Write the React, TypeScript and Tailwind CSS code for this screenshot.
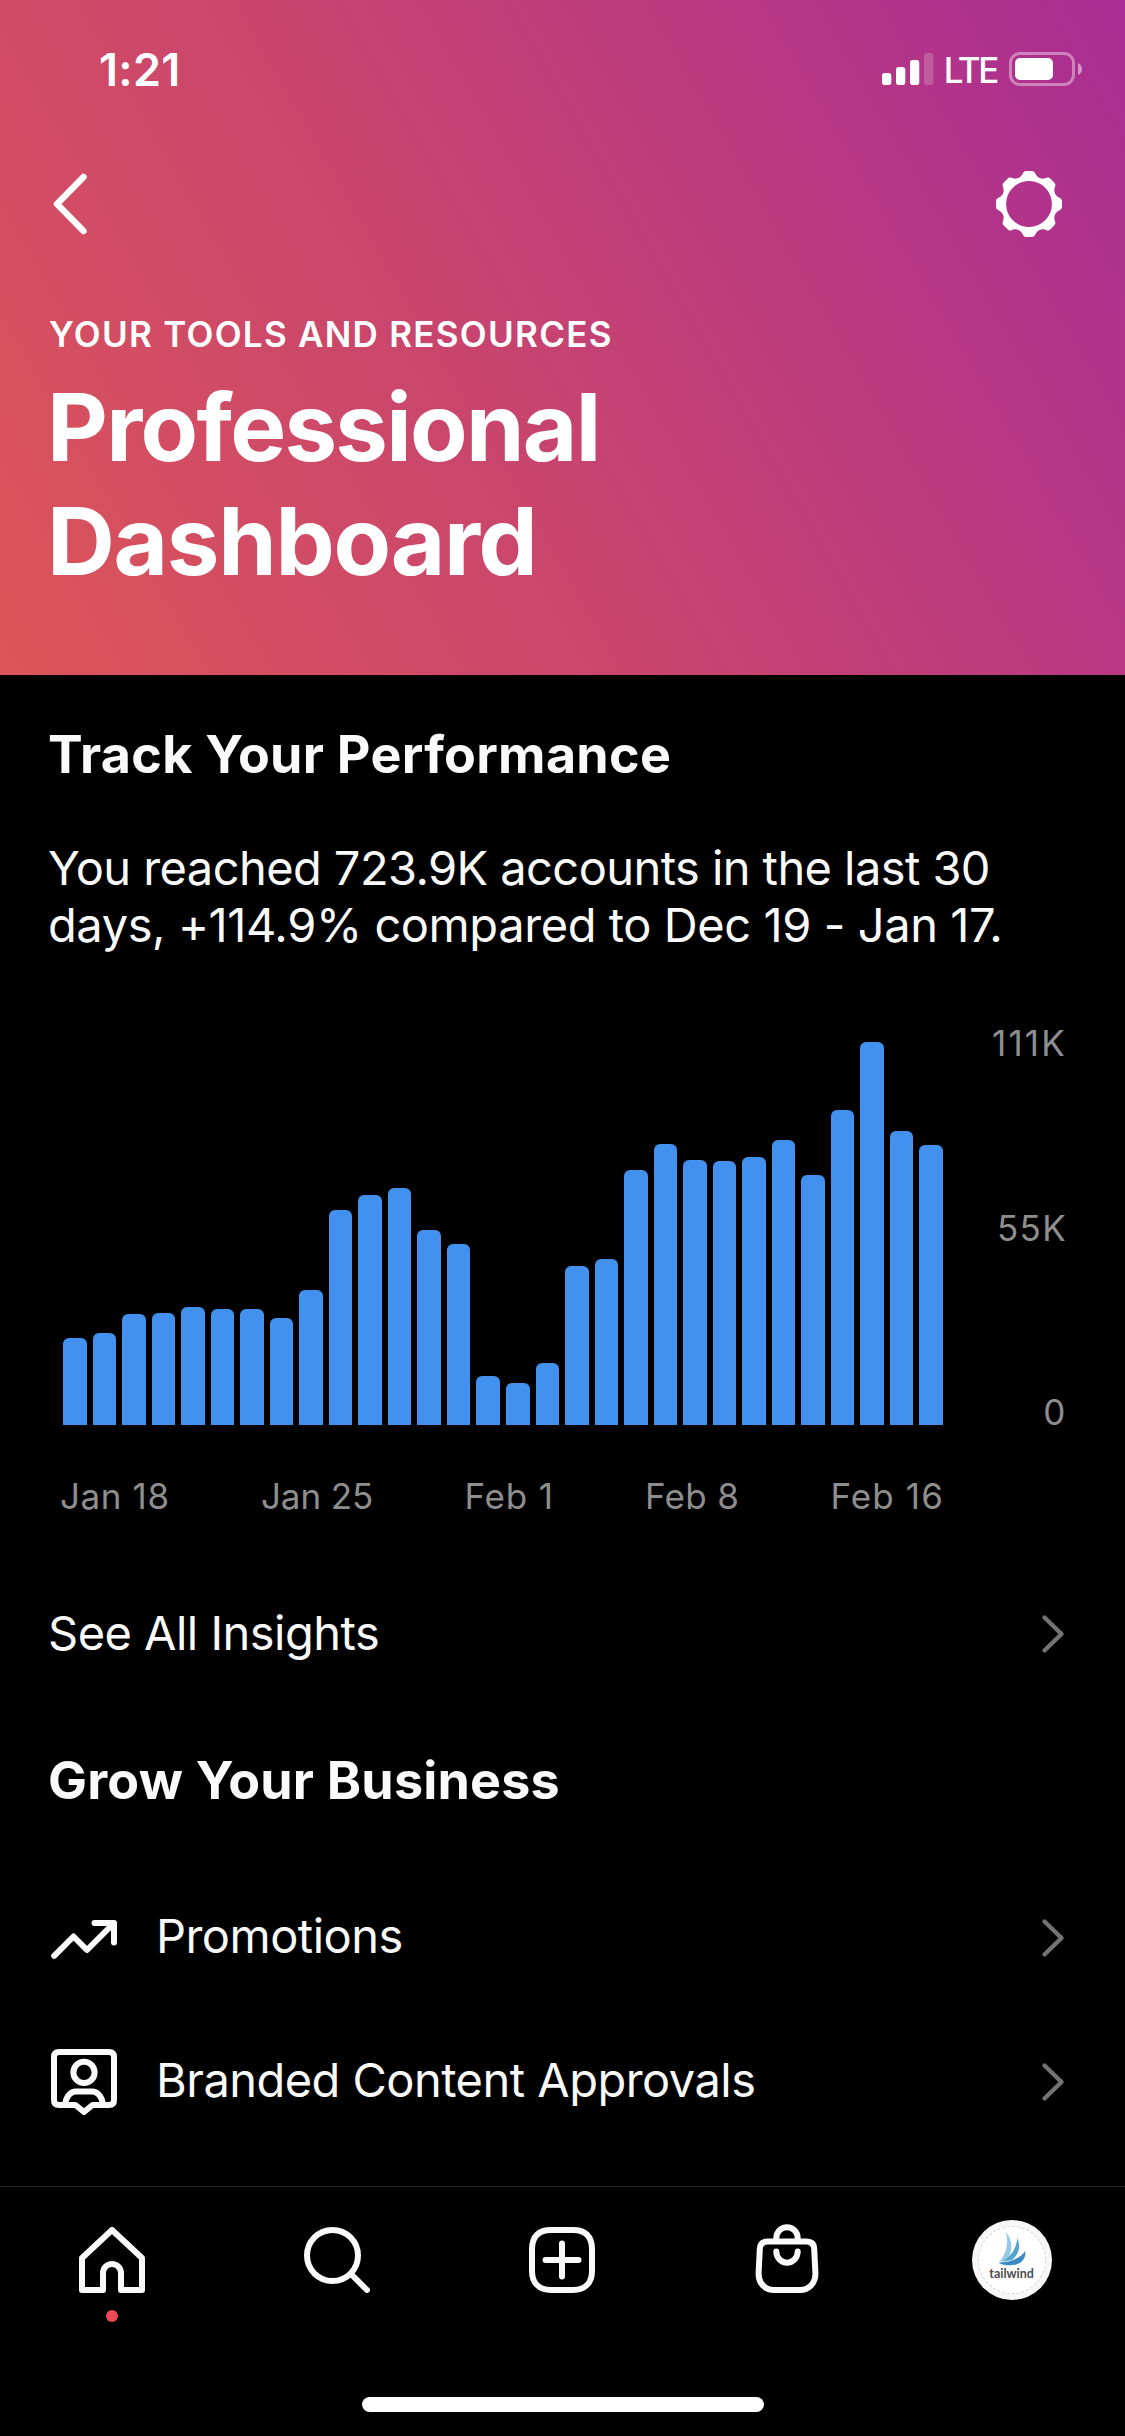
import React, { FC, ReactNode } from "react";

const reachData = [
  87, 92, 111, 112, 118, 116, 116, 107, 135, 215, 230, 237, 195, 181, 49, 42, 62, 159, 166, 255,
  281, 265, 264, 268, 285, 250, 315, 383, 294, 280,
];
const dateLabels = [
  { label: "Jan 18", className: "tracking-[0.6px]" },
  { label: "Jan 25", className: "tracking-[-0.1px]" },
  { label: "Feb 1", className: "tracking-[0.8px]" },
  { label: "Feb 8", className: "tracking-[0.3px]" },
  { label: "Feb 16", className: "tracking-[1.1px]" },
];
const valueLabels = [
  { label: "111K", className: "tracking-[2.2px]" },
  { label: "55K", className: "tracking-[1.3px]" },
  { label: "0", className: "tracking-[1.6px]" },
];

const IconChevronRight: FC = () => (
  <svg width="24" height="40" viewBox="0 0 24 40" fill="none" className="shrink-0">
    <path
      d="M3.5 3.5L20.5 20L3.5 36.5"
      stroke="#737373"
      strokeWidth="4.4"
      strokeLinecap="round"
      strokeLinejoin="round"
    />
  </svg>
);

const IconBack: FC = () => (
  <svg width="40" height="66" viewBox="0 0 40 66" fill="none">
    <path
      d="M33.5 6L7 33L33.5 60"
      stroke="#fff"
      strokeWidth="6.4"
      strokeLinecap="round"
      strokeLinejoin="round"
    />
  </svg>
);

const IconGear: FC = () => (
  <svg width="66" height="66" viewBox="-33 -33 66 66" fill="#fff">
    <circle r="25.3" fill="none" stroke="#fff" strokeWidth="4.8" />
    {[0, 45, 90, 135, 180, 225, 270, 315].map((deg) => (
      <path
        key={deg}
        transform={`rotate(${deg})`}
        d="M-12 -25C-8 -27 -7 -29 -6 -31Q-5 -33 -3 -33H3Q5 -33 6 -31C7 -29 8 -27 12 -25Z"
      />
    ))}
  </svg>
);

const IconTrend: FC = () => (
  <svg width="66" height="66" viewBox="0 0 66 66" fill="none">
    <path
      d="M3.2 50.8L22.5 31.5L36 45L62.5 18.5M43.5 18H63V37.5"
      stroke="#fafafa"
      strokeWidth="6"
      strokeLinecap="round"
      strokeLinejoin="round"
    />
  </svg>
);

const IconBranded: FC = () => (
  <svg width="66" height="66" viewBox="0 0 66 66" fill="none" stroke="#fafafa" strokeWidth="6">
    <path
      d="M8 3H58Q63 3 63 8V51Q63 56 58 56H41.5L33 63L24.5 56H8Q3 56 3 51V8Q3 3 8 3Z"
      strokeLinejoin="round"
    />
    <circle cx="33" cy="23.4" r="10.6" />
    <path d="M14.3 55C15 47 20 42.5 25 42.5H41C46 42.5 51 47 51.7 55" />
  </svg>
);

const IconHome: FC = () => (
  <svg width="66" height="66" viewBox="0 0 66 66" fill="none">
    <path
      d="M3 31L33 3L63 31V63H42V46A9 9 0 0 0 24 46V63H3Z"
      stroke="#fafafa"
      strokeWidth="6"
      strokeLinejoin="round"
    />
  </svg>
);

const IconSearch: FC = () => (
  <svg width="66" height="66" viewBox="0 0 66 66" fill="none" stroke="#fafafa" strokeWidth="6">
    <circle cx="28.5" cy="28.5" r="25.5" />
    <path d="M47 47L63 63" strokeLinecap="round" />
  </svg>
);

const IconAdd: FC = () => (
  <svg width="66" height="66" viewBox="0 0 66 66" fill="none" stroke="#fafafa" strokeWidth="6">
    <path d="M3 22C3 9 10 3 22 3H44C56 3 63 9 63 22V44C63 56 56 63 44 63H22C10 63 3 56 3 44Z" />
    <path d="M33 16.5V49.5M16.5 33H49.5" strokeLinecap="round" />
  </svg>
);

const IconShop: FC = () => (
  <svg width="66" height="72" viewBox="0 0 66 72" fill="none" stroke="#fafafa" strokeWidth="6">
    <path d="M14 20.5H52Q60 20.5 60.2 28L61.4 52C61.8 63 54 69 46 69H20C12 69 4.2 63 4.6 52L5.8 28Q6 20.5 14 20.5Z" />
    <path d="M22.3 20V17A10.7 10.7 0 0 1 43.7 17V20" />
    <path d="M22.3 30.5A10.7 11.2 0 0 0 43.7 30.5" strokeLinecap="round" />
  </svg>
);

const StatusIcons: FC = () => (
  <div className="flex items-center">
    <svg width="52" height="34" viewBox="0 0 52 34" fill="#fff">
      <rect x="0" y="21" width="9.3" height="12" rx="2.8" />
      <rect x="14" y="15" width="9.3" height="18" rx="2.8" />
      <rect x="28" y="8" width="9.3" height="25" rx="2.8" />
      <rect x="42" y="1" width="9.3" height="32" rx="2.8" opacity="0.2" />
    </svg>
    <span className="mt-[2px] ml-[10px] text-[35px] leading-none font-medium tracking-[-2.4px]">
      LTE
    </span>
    <svg width="74" height="34" viewBox="0 0 74 34" className="ml-[12px]">
      <rect
        x="1.5"
        y="1.5"
        width="63"
        height="31"
        rx="9.5"
        fill="none"
        stroke="#fff"
        strokeWidth="3"
        opacity="0.4"
      />
      <rect x="6" y="6" width="38" height="22" rx="5" fill="#fff" />
      <path d="M69 11Q73 13 73 17Q73 21 69 23Z" fill="#fff" opacity="0.5" />
    </svg>
  </div>
);

const Avatar: FC = () => (
  <div className="flex size-20 items-center justify-center rounded-full bg-[#f7f7f7]">
    <div className="flex size-[68px] flex-col items-center rounded-full border border-dashed border-[#d4d4d4] bg-white pt-[5px]">
      <svg width="28" height="34" viewBox="0 0 28 34" className="shrink-0">
        <path d="M8 0C15 8 15 20 9 27L1 30C8 22 11 12 8 0Z" fill="#93c9e4" />
        <path d="M19.5 6C23 15 21 22 14 28L3 30C13 25 18 17 19.5 6Z" fill="#57a5d3" />
        <path d="M27.5 19C28 28 22 33 14 33C9 33.5 3 33 0.5 30.5C11 31 21 27 27.5 19Z" fill="#3b8bc6" />
      </svg>
      <span className="font-['Lato'] text-[12.5px] leading-[15px] font-bold text-[#4b4b50]">
        tailwind
      </span>
    </div>
  </div>
);

type TMenuRow = { label: string; icon: ReactNode };

const menuRows: TMenuRow[] = [
  { label: "Promotions", icon: <IconTrend /> },
  { label: "Branded Content Approvals", icon: <IconBranded /> },
];

const App: FC = () => {
  return (
    <div className="flex h-[2436px] w-[1125px] flex-col overflow-hidden bg-black font-['Inter',sans-serif] text-[#fafafa]">
      <header className="h-[675px] shrink-0 bg-[linear-gradient(60deg,#dc5558_0%,#c54272_50%,#a92d94_100%)] text-white">
        <div className="flex h-[138px] items-center justify-between pr-[42px] pl-[99px]">
          <span className="text-[45px] leading-none font-semibold tracking-[0.3px]">1:21</span>
          <StatusIcons />
        </div>
        <div className="flex h-[132px] items-center justify-between pr-[63px] pl-[50px]">
          <IconBack />
          <IconGear />
        </div>
        <p className="mt-[39px] pl-[49px] text-[35px] leading-[50px] font-semibold tracking-[1.27px]">
          YOUR TOOLS AND RESOURCES
        </p>
        <h1 className="mt-[11px] pl-[47px] text-[94px] leading-[114px] font-bold">
          <span className="tracking-[-1.7px]">Professional</span>
          <br />
          <span className="tracking-[-1.3px]">Dashboard</span>
        </h1>
      </header>

      <main className="flex grow flex-col px-[49px]">
        <h2 className="mt-[50px] -ml-px text-[52px] leading-[60px] font-bold tracking-[0.3px]">
          Track Your Performance
        </h2>
        <p className="mt-[54px] -ml-px text-[47px] leading-[57px]">
          <span className="tracking-[-0.57px]">You reached 723.9K accounts in the last 30</span>
          <br />
          <span className="tracking-[-0.42px]">days, +114.9% compared to Dec 19 - Jan 17.</span>
        </p>

        <div className="mt-[68px] flex justify-between text-[35px] leading-[44px] text-[#8e8e8e]">
          <div className="ml-[14px] flex h-[404px] w-[880px] items-end gap-[6px]">
            {reachData.map((value, index) => (
              <div
                key={index}
                className="flex-1 rounded-t-[6px] bg-[#4291ef]"
                style={{ height: value }}
              />
            ))}
          </div>
          <div className="flex h-[413px] flex-col justify-between pr-[9px] text-right">
            {valueLabels.map((item) => (
              <span key={item.label} className={item.className}>
                {item.label}
              </span>
            ))}
          </div>
        </div>
        <div className="mt-[40px] ml-[11px] flex w-[884px] justify-between text-[35px] leading-[44px] text-[#8e8e8e]">
          {dateLabels.map((item) => (
            <span key={item.label} className={item.className}>
              {item.label}
            </span>
          ))}
        </div>

        <div className="mt-[66px] flex h-[100px] items-center justify-between pr-[11px]">
          <span className="-ml-px pb-[3px] text-[47px] leading-[90px] tracking-[-0.52px]">
            See All Insights
          </span>
          <IconChevronRight />
        </div>

        <h2 className="mt-[67px] -ml-px text-[52px] leading-[60px] font-bold tracking-[0.2px]">
          Grow Your Business
        </h2>
        <div className="mt-[55px]">
          {menuRows.map((row) => (
            <div key={row.label} className="flex h-[144px] items-center pr-[11px] pl-[2px]">
              {row.icon}
              <span className="ml-[39px] grow pb-[5px] text-[47px] leading-none tracking-[-0.53px]">
                {row.label}
              </span>
              <IconChevronRight />
            </div>
          ))}
        </div>
      </main>

      <nav className="flex h-[250px] shrink-0 flex-col items-center border-t border-[#262626]">
        <div className="grid h-[146px] w-full shrink-0 grid-cols-5 place-items-center pr-px">
          <div className="relative">
            <IconHome />
            <span className="absolute top-[83px] left-[27px] size-3 rounded-full bg-[#ed4956]" />
          </div>
          <IconSearch />
          <IconAdd />
          <div className="-mt-[6px]">
            <IconShop />
          </div>
          <Avatar />
        </div>
        <div className="mt-[64px] h-[15px] w-[402px] shrink-0 rounded-full bg-white" />
      </nav>
    </div>
  );
};

export default App;
